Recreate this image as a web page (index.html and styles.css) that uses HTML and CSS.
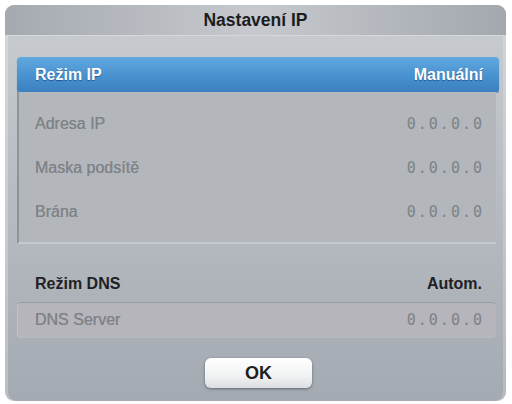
FILE: index.html
```html
<!DOCTYPE html>
<html lang="cs">
<head>
  <meta charset="UTF-8">
  <title>Nastavení IP</title>
  <link rel="stylesheet" href="styles.css">
</head>
<body>

  <div class="dialog">
    <div class="titulek">Nastavení IP</div>

    <div class="obsah">
      <div class="rezim vybrany">
        <span>Režim IP</span>
        <span>Manuální</span>
      </div>

      <div class="skupina">
        <div class="radek">
          <span>Adresa IP</span>
          <span class="adresa">0.0.0.0</span>
        </div>
        <div class="radek">
          <span>Maska podsítě</span>
          <span class="adresa">0.0.0.0</span>
        </div>
        <div class="radek">
          <span>Brána</span>
          <span class="adresa">0.0.0.0</span>
        </div>
      </div>

      <div class="rezim dns">
        <span>Režim DNS</span>
        <span>Autom.</span>
      </div>

      <div class="radek server">
        <span>DNS Server</span>
        <span class="adresa">0.0.0.0</span>
      </div>

      <div class="tlacitka">
        <button>OK</button>
      </div>
    </div>
  </div>

</body>
</html>
```

FILE: styles.css
```css
body {
  margin: 0;
  background: #fff;
  font-family: "Liberation Sans", Arial, sans-serif;
}

.dialog {
  margin: 5px;
  width: 501px;
  height: 396px;
  border-radius: 9px;
  overflow: hidden;
  background: linear-gradient(#c9ccd0, #b9bdc3 45%, #a4aab2);
  box-shadow: inset 3px 0 0 rgba(255, 255, 255, 0.25), inset -3px 0 0 rgba(255, 255, 255, 0.2);
}

.titulek {
  height: 30px;
  line-height: 31px;
  text-align: center;
  font-weight: bold;
  font-size: 17.5px;
  color: #1c1d1f;
  background: linear-gradient(90deg, #a5aab1, #c6c9cd 50%, #a3a8af);
  border-bottom: 1px solid #d6d8db;
}

.obsah {
  padding: 21px 10px 0 12px;
}

.rezim {
  display: flex;
  justify-content: space-between;
  align-items: center;
  font-weight: bold;
  font-size: 16px;
}

.vybrany {
  height: 35px;
  margin-right: -3px;
  padding: 0 16px 0 18px;
  border-radius: 4px 4px 2px 2px;
  color: #fff;
  text-shadow: 0 1px 1px rgba(0, 40, 90, 0.5);
  background: linear-gradient(#62a9df, #4a93d1 50%, #3b80c0);
  box-shadow: 0 1px 1px rgba(30, 60, 100, 0.4);
}

.skupina {
  padding: 10px 0 8px;
  background: #b3b7bc;
  border-left: 2px solid #8f949a;
  border-bottom: 2px solid #c6c9cd;
}

.radek {
  display: flex;
  justify-content: space-between;
  align-items: center;
  height: 44px;
  padding: 0 14px 0 16px;
  font-size: 16px;
  color: #7f8388;
  text-shadow: 0 0 0.6px #7f8388;
}

.adresa {
  font-family: "DejaVu Sans Mono", monospace;
  font-size: 15px;
  letter-spacing: 2px;
  margin-right: -2px;
  color: #7e8287;
  text-shadow: none;
}

.dns {
  height: 36px;
  margin-top: 22px;
  padding: 0 14px 0 18px;
  color: #1f2124;
}

.server {
  height: 34px;
  padding-left: 18px;
  border-radius: 4px;
  border-top: 1px solid #979ca2;
  background: #b5b5bb;
  box-shadow: inset 1px 0 0 #c3c5ca, 0 1px 0 rgba(255, 255, 255, 0.15);
}

.tlacitka {
  display: flex;
  justify-content: center;
  margin-top: 21px;
}

button {
  width: 107px;
  height: 30px;
  margin-left: 4px;
  border: none;
  border-radius: 6px;
  font-family: "Liberation Sans", Arial, sans-serif;
  font-weight: bold;
  font-size: 18px;
  color: #1d1e20;
  background: linear-gradient(#ffffff, #f1f2f3 60%, #dcdee1);
  box-shadow: 0 1px 3px rgba(40, 50, 60, 0.55);
}
```
